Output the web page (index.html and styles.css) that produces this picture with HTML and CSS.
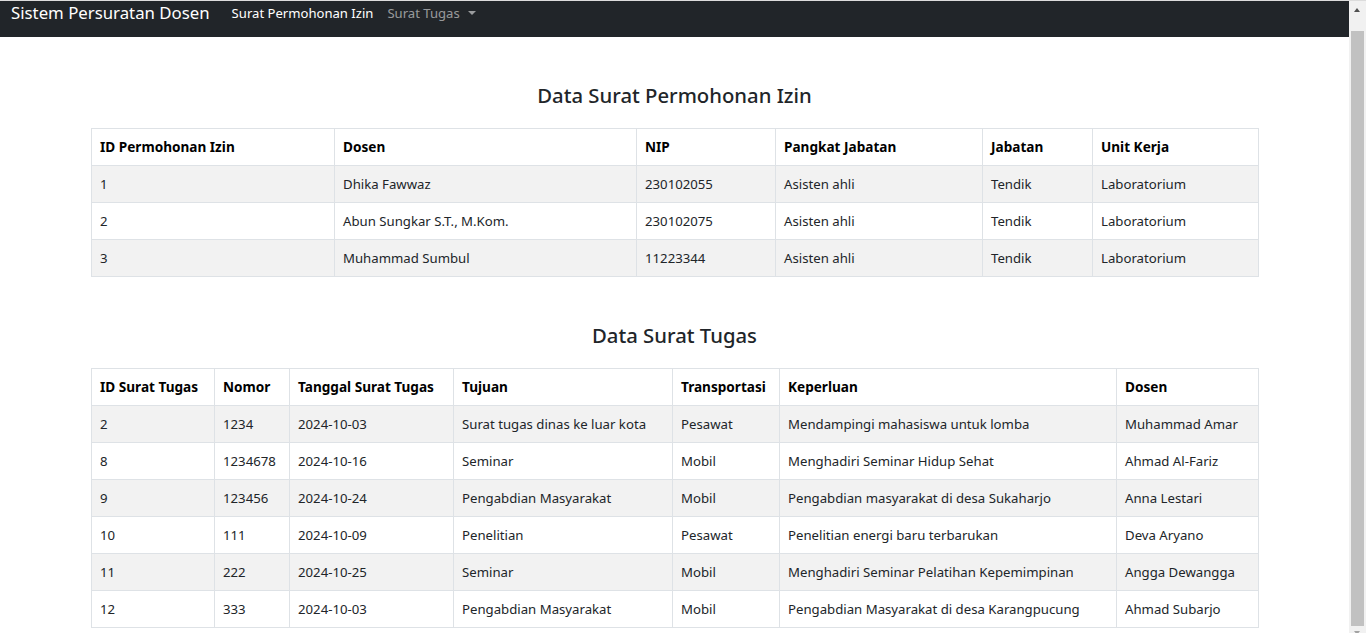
FILE: index.html
```html
<!DOCTYPE html>
<html lang="id">
<head>
<meta charset="utf-8">
<title>Sistem Persuratan Dosen</title>
<link rel="stylesheet" href="styles.css">
</head>
<body>
<nav class="navbar">
  <a class="brand" href="#">Sistem Persuratan Dosen</a>
  <ul class="nav">
    <li><a class="nav-link active" href="#">Surat Permohonan Izin</a></li>
    <li><a class="nav-link dropdown" href="#">Surat Tugas <span class="caret"></span></a></li>
  </ul>
</nav>

<main class="container">
  <section class="section">
    <h3 class="title">Data Surat Permohonan Izin</h3>
    <table class="table izin">
      <thead>
        <tr><th>ID Permohonan Izin</th><th>Dosen</th><th>NIP</th><th>Pangkat Jabatan</th><th>Jabatan</th><th>Unit Kerja</th></tr>
      </thead>
      <tbody>
        <tr><td>1</td><td>Dhika Fawwaz</td><td>230102055</td><td>Asisten ahli</td><td>Tendik</td><td>Laboratorium</td></tr>
        <tr><td>2</td><td>Abun Sungkar S.T., M.Kom.</td><td>230102075</td><td>Asisten ahli</td><td>Tendik</td><td>Laboratorium</td></tr>
        <tr><td>3</td><td>Muhammad Sumbul</td><td>11223344</td><td>Asisten ahli</td><td>Tendik</td><td>Laboratorium</td></tr>
      </tbody>
    </table>
  </section>

  <section class="section second">
    <h3 class="title">Data Surat Tugas</h3>
    <table class="table tugas">
      <thead>
        <tr><th>ID Surat Tugas</th><th>Nomor</th><th>Tanggal Surat Tugas</th><th>Tujuan</th><th>Transportasi</th><th>Keperluan</th><th>Dosen</th></tr>
      </thead>
      <tbody>
        <tr><td>2</td><td>1234</td><td>2024-10-03</td><td>Surat tugas dinas ke luar kota</td><td>Pesawat</td><td>Mendampingi mahasiswa untuk lomba</td><td>Muhammad Amar</td></tr>
        <tr><td>8</td><td>1234678</td><td>2024-10-16</td><td>Seminar</td><td>Mobil</td><td>Menghadiri Seminar Hidup Sehat</td><td>Ahmad Al-Fariz</td></tr>
        <tr><td>9</td><td>123456</td><td>2024-10-24</td><td>Pengabdian Masyarakat</td><td>Mobil</td><td>Pengabdian masyarakat di desa Sukaharjo</td><td>Anna Lestari</td></tr>
        <tr><td>10</td><td>111</td><td>2024-10-09</td><td>Penelitian</td><td>Pesawat</td><td>Penelitian energi baru terbarukan</td><td>Deva Aryano</td></tr>
        <tr><td>11</td><td>222</td><td>2024-10-25</td><td>Seminar</td><td>Mobil</td><td>Menghadiri Seminar Pelatihan Kepemimpinan</td><td>Angga Dewangga</td></tr>
        <tr><td>12</td><td>333</td><td>2024-10-03</td><td>Pengabdian Masyarakat</td><td>Mobil</td><td>Pengabdian Masyarakat di desa Karangpucung</td><td>Ahmad Subarjo</td></tr>
      </tbody>
    </table>
  </section>
</main>

<div class="scrollbar" aria-hidden="true">
  <span class="sb-up"></span>
  <span class="sb-thumb"></span>
  <span class="sb-down"></span>
</div>
</body>
</html>
```

FILE: styles.css
```css
* { box-sizing: border-box; }

html, body {
  margin: 0;
  padding: 0;
}

body {
  font-family: "Noto Sans", "Open Sans", sans-serif;
  font-size: 13.2px;
  color: #212529;
  background: #fff;
  border-top: 1px solid #dcdcdc;
  padding-right: 17px;
}

.navbar {
  display: flex;
  align-items: flex-start;
  height: 36px;
  background: #212529;
  padding: 0 0 0 11px;
}

.brand {
  color: #fff;
  text-decoration: none;
  font-size: 16.8px;
  line-height: 24px;
  margin-right: 22px;
}

.nav {
  display: flex;
  list-style: none;
  margin: 0;
  padding: 0;
  gap: 14px;
}

.nav-link {
  display: flex;
  align-items: center;
  color: rgba(255, 255, 255, 0.55);
  text-decoration: none;
  font-size: 13.1px;
  line-height: 24px;
}

.nav-link.active {
  color: #fff;
}

.caret {
  display: inline-block;
  margin-left: 8px;
  width: 0;
  height: 0;
  border-left: 4px solid transparent;
  border-right: 4px solid transparent;
  border-top: 4px solid rgba(255, 255, 255, 0.55);
}

.container {
  width: 1167px;
  margin: 0 auto;
  padding-bottom: 12px;
}

.section {
  padding-top: 45px;
}

.section.second {
  padding-top: 45px;
}

.title {
  margin: 0 0 19px;
  text-align: center;
  font-size: 20.3px;
  font-weight: 500;
  line-height: 27px;
  color: #212529;
}

.table {
  width: 100%;
  border-collapse: collapse;
  table-layout: fixed;
}

.table th,
.table td {
  border: 1px solid #dee2e6;
  padding: 8px;
  line-height: 20px;
  height: 37px;
  text-align: left;
  vertical-align: top;
  white-space: nowrap;
}

.table th {
  font-weight: 700;
  font-size: 13.6px;
  color: #000;
}

.table tbody tr:nth-child(odd) {
  background: #f2f2f2;
}

.izin th:nth-child(1) { width: 243px; }
.izin th:nth-child(2) { width: 302px; }
.izin th:nth-child(3) { width: 139px; }
.izin th:nth-child(4) { width: 207px; }
.izin th:nth-child(5) { width: 110px; }
.izin th:nth-child(6) { width: 166px; }

.tugas th:nth-child(1) { width: 123px; }
.tugas th:nth-child(2) { width: 75px; }
.tugas th:nth-child(3) { width: 164px; }
.tugas th:nth-child(4) { width: 219px; }
.tugas th:nth-child(5) { width: 107px; }
.tugas th:nth-child(6) { width: 337px; }
.tugas th:nth-child(7) { width: 142px; }

/* browser scrollbar overlay */
.scrollbar {
  position: fixed;
  top: 1px;
  right: 0;
  bottom: 0;
  width: 17px;
  background: #f1f1f1;
}

.sb-up {
  position: absolute;
  top: 7px;
  left: 5px;
  width: 0;
  height: 0;
  border-left: 3.5px solid transparent;
  border-right: 3.5px solid transparent;
  border-bottom: 4px solid #505050;
}

.sb-thumb {
  position: absolute;
  top: 30px;
  left: 2px;
  width: 13px;
  height: 595px;
  background: #c1c1c1;
}

.sb-down {
  position: absolute;
  top: 630px;
  left: 5px;
  width: 0;
  height: 0;
  border-left: 3.5px solid transparent;
  border-right: 3.5px solid transparent;
  border-top: 4px solid #a3a3a3;
}
```
